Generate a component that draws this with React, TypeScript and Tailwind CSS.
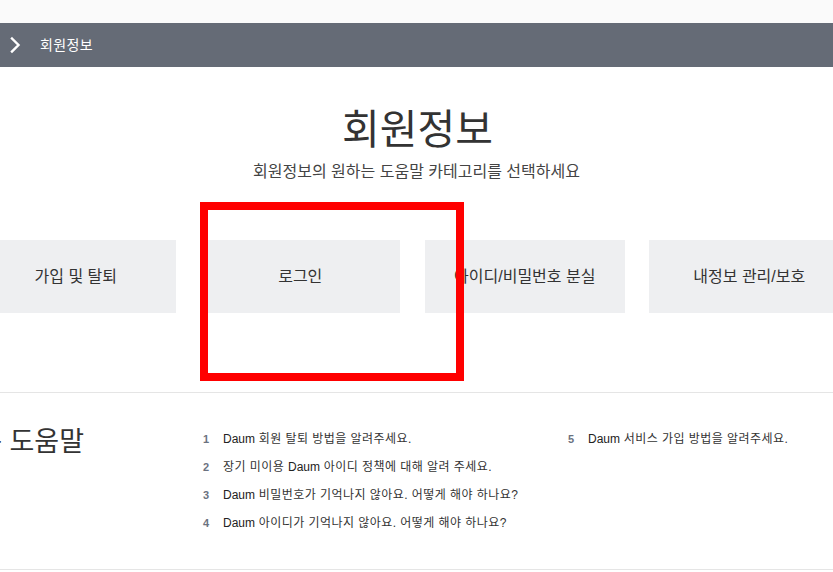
import React from 'react';

const FONT = '[font-family:"Liberation_Sans","Noto_Sans_CJK_KR",sans-serif]';

const categories = ['가입 및 탈퇴', '로그인', '아이디/비밀번호 분실', '내정보 관리/보호'];

const helpItems: { no: number; before?: string; after: string }[] = [
  { no: 1, after: ' 회원 탈퇴 방법을 알려주세요.' },
  { no: 2, before: '장기 미이용 ', after: ' 아이디 정책에 대해 알려 주세요.' },
  { no: 3, after: ' 비밀번호가 기억나지 않아요. 어떻게 해야 하나요?' },
  { no: 4, after: ' 아이디가 기억나지 않아요. 어떻게 해야 하나요?' },
  { no: 5, after: ' 서비스 가입 방법을 알려주세요.' },
];

const Chevron = () => (
  <svg width="14" height="18" viewBox="0 0 14 18" fill="none" stroke="white" strokeWidth="2.4" strokeLinecap="square">
    <polyline points="3,2.5 9.5,9 3,15.5" />
  </svg>
);

const HelpRow: React.FC<{ item: (typeof helpItems)[number] }> = ({ item }) => (
  <li className="flex items-center h-[28px]">
    <span className="w-[20px] text-[11px] font-bold text-[#6b7280]">{item.no}</span>
    <span className="text-[12px] tracking-[0.45px] text-[#333] whitespace-nowrap">
      {item.before}
      <span className="text-[#222] tracking-normal">Daum</span>
      {item.after}
    </span>
  </li>
);

const App: React.FC = () => {
  return (
    <div className={`relative w-[833px] h-[572px] overflow-hidden bg-white ${FONT}`}>
      <div className="h-[23px] bg-[#fafafa]" />

      {/* breadcrumb bar */}
      <div className="h-[44px] bg-[#656b76] flex items-center pl-[9px]">
        <Chevron />
        <span className="ml-[17px] text-[14px] tracking-[0.4px] text-white">회원정보</span>
      </div>

      {/* title */}
      <div className="flex flex-col items-center pt-[38px]">
        <h1 className="text-[41px] leading-[50px] text-[#333] pl-[2px]">회원정보</h1>
        <p className="mt-[7px] text-[16px] leading-[20px] text-[#444]">
          회원정보의 원하는 도움말 카테고리를 선택하세요
        </p>
      </div>

      {/* categories */}
      <div className="mt-[58px] flex justify-center gap-[24.5px] mr-[8px]">
        {categories.map((c) => (
          <div
            key={c}
            className="w-[200px] h-[73px] shrink-0 bg-[#eeeff1] flex items-center justify-center text-[16px] text-[#333]"
          >
            {c}
          </div>
        ))}
      </div>

      {/* help */}
      <div className="mt-[79px] border-t border-[#e5e5e5] border-b h-[178px] flex items-start">
        <div className="w-[84px] shrink-0 flex justify-end pt-[33px]">
          <h2 className="text-[27px] leading-[32px] text-[#333] whitespace-nowrap">자주 찾는 도움말</h2>
        </div>
        <div className="ml-[119px] pt-[32px] grid grid-cols-[365px_1fr]">
          <ul>
            {helpItems.slice(0, 4).map((it) => (
              <HelpRow key={it.no} item={it} />
            ))}
          </ul>
          <ul>
            {helpItems.slice(4).map((it) => (
              <HelpRow key={it.no} item={it} />
            ))}
          </ul>
        </div>
      </div>

      {/* highlight annotation */}
      <div className="absolute left-[200px] top-[202px] w-[264px] h-[179px] border-[8px] border-[#ff0000] pointer-events-none" />
    </div>
  );
};

export default App;
